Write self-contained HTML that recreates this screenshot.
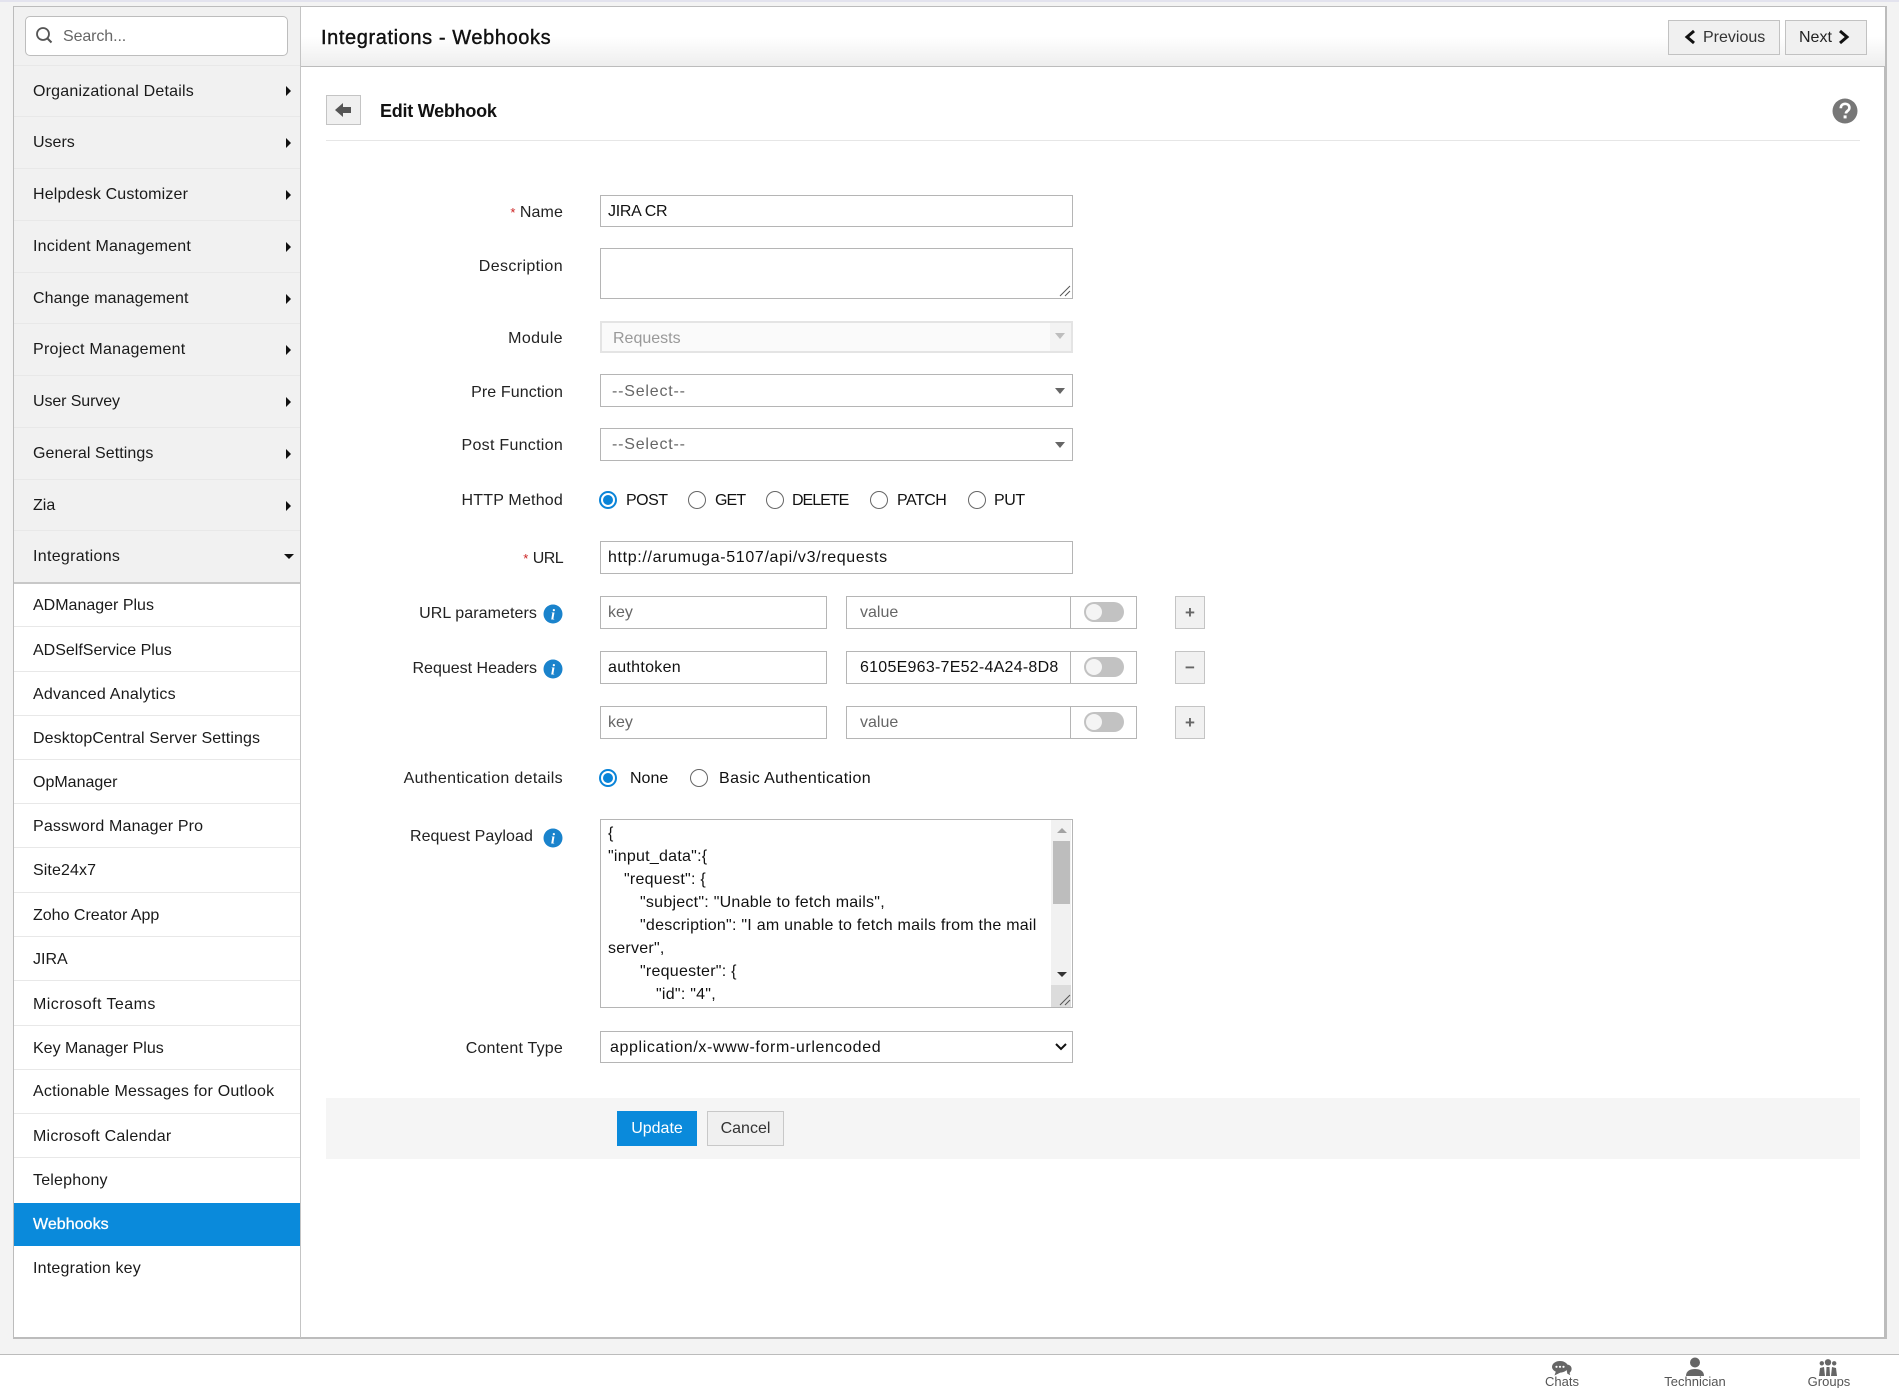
<!DOCTYPE html>
<html><head><meta charset="utf-8"><title>Edit Webhook</title>
<style>
html,body{margin:0;padding:0;background:#fff}
#p{position:relative;width:1899px;height:1388px;overflow:hidden;background:#f3f3f3;font-family:"Liberation Sans",sans-serif;font-size:16px;color:#111}
#p div,#p svg{position:absolute;box-sizing:border-box}
.t{line-height:20px;height:20px;white-space:nowrap;margin-top:2px}
.l{line-height:20px;height:20px;white-space:nowrap;right:1336px;text-align:right;color:#222;margin-top:2px}
.b{background:#fff;border:1px solid #b5b5b5}
.s{left:14px;width:286px;border-bottom:1px solid #e8e8e8}
.n{left:33px;line-height:20px;height:20px;white-space:nowrap;color:#1a1a1a;margin-top:1px}
.u{margin-top:2px}
.a{left:286px;width:0;height:0;border-left:5px solid #111;border-top:5px solid transparent;border-bottom:5px solid transparent;margin-top:1px}
.r{width:18px;height:18px;border:1px solid #666;border-radius:50%;background:#fff}
.rc{width:18px;height:18px;border:2px solid #0a84d8;border-radius:50%;background:#fff}
.rc div{left:2px;top:2px;width:10px;height:10px;border-radius:50%;background:#0a84d8}
.tg{width:40px;height:20px;border-radius:10px;background:#c2c2c2}
.tg div{left:2px;top:2px;width:16px;height:16px;border-radius:50%;background:#f4f4f4}
.pb{background:#f1f1f1;border:1px solid #c4c4c4;width:30px;height:33px;text-align:center;line-height:32px;font-weight:bold;color:#666;font-size:17px}
.pl{left:608px;line-height:23px;height:23px;white-space:nowrap;color:#111;letter-spacing:.25px;margin-top:1px}
.f{color:#555;font-size:13px;line-height:14px;text-align:center;white-space:nowrap;width:100px}
</style></head><body>
<div id="p">
<div style="left:0;top:0;width:1899px;height:2px;background:#e3e3ee"></div>
<div style="left:13px;top:6px;width:1874px;height:1333px;background:#fff;border:1px solid #bcbcbc;border-right:3px solid #bcbcbc;border-bottom:2px solid #bcbcbc"></div>

<!-- sidebar -->
<div style="left:14px;top:7px;width:286px;height:576px;background:#f1f1f1"></div>
<div style="left:300px;top:7px;width:1px;height:1331px;background:#c4c4c4"></div>
<div style="left:14px;top:582px;width:286px;height:2px;background:#c8c8c8"></div>
<div style="left:25px;top:16px;width:263px;height:40px;background:#fff;border:1px solid #bdbdbd;border-radius:5px"></div>
<svg style="left:35px;top:26px" width="18" height="18" viewBox="0 0 18 18"><circle cx="8" cy="8" r="6" fill="none" stroke="#555" stroke-width="1.8"/><path d="M12.5 12.5L16.5 16.5" stroke="#555" stroke-width="2"/></svg>
<div class="t" style="left:63px;top:25px;color:#666;letter-spacing:-.1px">Search...</div>

<div class="s" style="top:65px"></div><div class="n" style="top:81px;letter-spacing:.2px">Organizational Details</div><div class="a" style="top:85px"></div>
<div class="s" style="top:116px"></div><div class="n" style="top:132px">Users</div><div class="a" style="top:137px"></div>
<div class="s" style="top:168px"></div><div class="n" style="top:184px;letter-spacing:.16px">Helpdesk Customizer</div><div class="a" style="top:189px"></div>
<div class="s" style="top:220px"></div><div class="n" style="top:236px;letter-spacing:.22px">Incident Management</div><div class="a" style="top:241px"></div>
<div class="s" style="top:272px"></div><div class="n" style="top:288px;letter-spacing:.1px">Change management</div><div class="a" style="top:293px"></div>
<div class="s" style="top:323px"></div><div class="n" style="top:339px;letter-spacing:.27px">Project Management</div><div class="a" style="top:344px"></div>
<div class="s" style="top:375px"></div><div class="n" style="top:391px;letter-spacing:-.1px">User Survey</div><div class="a" style="top:396px"></div>
<div class="s" style="top:427px"></div><div class="n" style="top:443px;letter-spacing:.08px">General Settings</div><div class="a" style="top:448px"></div>
<div class="s" style="top:479px"></div><div class="n" style="top:495px">Zia</div><div class="a" style="top:500px"></div>
<div class="s" style="top:530px"></div><div class="n" style="top:546px;letter-spacing:.3px">Integrations</div>
<div style="left:284px;top:554px;width:0;height:0;border-top:5px solid #111;border-left:5px solid transparent;border-right:5px solid transparent"></div>

<div class="s" style="top:626px"></div><div class="n u" style="top:594px">ADManager Plus</div>
<div class="s" style="top:671px"></div><div class="n u" style="top:639px">ADSelfService Plus</div>
<div class="s" style="top:715px"></div><div class="n u" style="top:683px;letter-spacing:.23px">Advanced Analytics</div>
<div class="s" style="top:759px"></div><div class="n u" style="top:727px;letter-spacing:.1px">DesktopCentral Server Settings</div>
<div class="s" style="top:803px"></div><div class="n u" style="top:771px">OpManager</div>
<div class="s" style="top:847px"></div><div class="n u" style="top:815px;letter-spacing:.15px">Password Manager Pro</div>
<div class="s" style="top:892px"></div><div class="n u" style="top:859px;letter-spacing:.1px">Site24x7</div>
<div class="s" style="top:936px"></div><div class="n u" style="top:904px">Zoho Creator App</div>
<div class="s" style="top:980px"></div><div class="n u" style="top:948px">JIRA</div>
<div class="s" style="top:1025px"></div><div class="n u" style="top:993px;letter-spacing:.44px">Microsoft Teams</div>
<div class="s" style="top:1069px"></div><div class="n u" style="top:1037px">Key Manager Plus</div>
<div class="s" style="top:1113px"></div><div class="n u" style="top:1080px;letter-spacing:.21px">Actionable Messages for Outlook</div>
<div class="s" style="top:1157px"></div><div class="n u" style="top:1125px;letter-spacing:.23px">Microsoft Calendar</div>
<div class="n u" style="top:1169px;letter-spacing:.2px">Telephony</div>
<div style="left:14px;top:1203px;width:286px;height:43px;background:#0a8adb"></div>
<div class="n u" style="top:1213px;color:#fff;-webkit-text-stroke:.3px #fff;letter-spacing:.05px">Webhooks</div>
<div class="n u" style="top:1257px;letter-spacing:.2px">Integration key</div>

<!-- header -->
<div style="left:301px;top:7px;width:1584px;height:60px;background:linear-gradient(#fff 0,#fff 50%,#eee 100%);border-bottom:1px solid #bcbcbc"></div>
<div class="t" style="left:321px;top:25px;font-size:20px;line-height:22px;height:22px;color:#111;letter-spacing:.6px;-webkit-text-stroke:.4px #111">Integrations - Webhooks</div>
<div style="left:1668px;top:20px;width:112px;height:35px;background:#f0f0f0;border:1px solid #c2c2c2"></div>
<svg style="left:1684px;top:29px" width="12" height="16" viewBox="0 0 12 16"><path d="M10 2L3 8l7 6" fill="none" stroke="#111" stroke-width="3"/></svg>
<div class="t" style="left:1703px;top:26px;color:#333">Previous</div>
<div style="left:1785px;top:20px;width:82px;height:35px;background:#f0f0f0;border:1px solid #c2c2c2"></div>
<div class="t" style="left:1799px;top:26px;color:#222">Next</div>
<svg style="left:1838px;top:29px" width="12" height="16" viewBox="0 0 12 16"><path d="M2 2l7 6-7 6" fill="none" stroke="#111" stroke-width="3"/></svg>

<!-- title row -->
<div style="left:326px;top:95px;width:35px;height:30px;background:#f0f0f0;border:1px solid #c4c4c4"></div>
<svg style="left:334px;top:102px" width="18" height="16" viewBox="0 0 18 16"><path d="M1 8L9 1v4h8v6H9v4z" fill="#555"/></svg>
<div class="t" style="left:380px;top:99px;font-size:18px;font-weight:bold;line-height:20px;letter-spacing:-.25px">Edit Webhook</div>
<svg style="left:1832px;top:98px" width="26" height="26" viewBox="0 0 26 26"><circle cx="13" cy="13" r="12.5" fill="#777"/><path d="M8.8 10.2c0-6 8.6-5.6 8.6-.5 0 3.2-3.5 3.2-3.5 5.8" fill="none" stroke="#fff" stroke-width="2.6"/><rect x="11.6" y="17.4" width="3" height="3" fill="#fff"/></svg>
<div style="left:326px;top:140px;width:1534px;height:1px;background:#e6e6e6"></div>

<!-- labels -->
<div class="l" style="top:201px"><span style="color:#c22;font-size:13px">*</span> <span style="letter-spacing:.1px">Name</span></div>
<div class="l" style="top:255px;letter-spacing:.38px">Description</div>
<div class="l" style="top:327px;letter-spacing:.4px">Module</div>
<div class="l" style="top:381px;letter-spacing:.1px">Pre Function</div>
<div class="l" style="top:434px;letter-spacing:.28px">Post Function</div>
<div class="l" style="top:489px;letter-spacing:.2px">HTTP Method</div>
<div class="l" style="top:547px"><span style="color:#c22;font-size:13px">*</span> <span style="letter-spacing:-.6px">URL</span></div>
<div class="l" style="top:602px;right:1362px;letter-spacing:.08px">URL parameters</div>
<div class="l" style="top:657px;right:1362px">Request Headers</div>
<div class="l" style="top:767px;letter-spacing:.33px">Authentication details</div>
<div class="l" style="top:825px;right:1366px;letter-spacing:.08px">Request Payload</div>
<div class="l" style="top:1037px;letter-spacing:.2px">Content Type</div>

<!-- info icons -->
<svg style="left:543px;top:604px" width="20" height="20" viewBox="0 0 20 20"><circle cx="10" cy="10" r="9.5" fill="#1a83cc"/><text x="10" y="15.5" text-anchor="middle" font-family="Liberation Serif" font-style="italic" font-weight="bold" font-size="15" fill="#fff">i</text></svg>
<svg style="left:543px;top:659px" width="20" height="20" viewBox="0 0 20 20"><circle cx="10" cy="10" r="9.5" fill="#1a83cc"/><text x="10" y="15.5" text-anchor="middle" font-family="Liberation Serif" font-style="italic" font-weight="bold" font-size="15" fill="#fff">i</text></svg>
<svg style="left:543px;top:828px" width="20" height="20" viewBox="0 0 20 20"><circle cx="10" cy="10" r="9.5" fill="#1a83cc"/><text x="10" y="15.5" text-anchor="middle" font-family="Liberation Serif" font-style="italic" font-weight="bold" font-size="15" fill="#fff">i</text></svg>

<!-- name / description -->
<div class="b" style="left:600px;top:195px;width:473px;height:32px"></div>
<div class="t" style="left:608px;top:200px;letter-spacing:-.3px">JIRA CR</div>
<div class="b" style="left:600px;top:248px;width:473px;height:51px"></div>
<svg style="left:1057px;top:283px" width="14" height="14" viewBox="0 0 14 14"><path d="M13 3L3 13M13 8L8 13" stroke="#555" stroke-width="1" fill="none"/></svg>

<!-- selects -->
<div style="left:600px;top:321px;width:473px;height:32px;background:#fafafa;border:2px solid #e4e4e4"></div>
<div style="left:1050px;top:323px;width:21px;height:28px;background:#f3f3f3"></div>
<div class="t" style="left:613px;top:327px;color:#999">Requests</div>
<div style="left:1055px;top:333px;width:0;height:0;border-top:6px solid #bdbdbd;border-left:5px solid transparent;border-right:5px solid transparent"></div>

<div class="b" style="left:600px;top:374px;width:473px;height:33px"></div>
<div class="t" style="left:612px;top:380px;color:#666;letter-spacing:.8px">--Select--</div>
<div style="left:1055px;top:388px;width:0;height:0;border-top:6px solid #666;border-left:5px solid transparent;border-right:5px solid transparent"></div>
<div class="b" style="left:600px;top:428px;width:473px;height:33px"></div>
<div class="t" style="left:612px;top:433px;color:#666;letter-spacing:.8px">--Select--</div>
<div style="left:1055px;top:442px;width:0;height:0;border-top:6px solid #666;border-left:5px solid transparent;border-right:5px solid transparent"></div>

<!-- http method -->
<div class="rc" style="left:599px;top:491px"><div></div></div><div class="t" style="left:626px;top:489px;letter-spacing:-.5px">POST</div>
<div class="r" style="left:688px;top:491px"></div><div class="t" style="left:715px;top:489px;letter-spacing:-.9px">GET</div>
<div class="r" style="left:766px;top:491px"></div><div class="t" style="left:792px;top:489px;letter-spacing:-1px">DELETE</div>
<div class="r" style="left:870px;top:491px"></div><div class="t" style="left:897px;top:489px;letter-spacing:-.5px">PATCH</div>
<div class="r" style="left:968px;top:491px"></div><div class="t" style="left:994px;top:489px;letter-spacing:-.4px">PUT</div>

<!-- url -->
<div class="b" style="left:600px;top:541px;width:473px;height:33px"></div>
<div class="t" style="left:608px;top:546px;letter-spacing:.65px">http://arumuga-5107/api/v3/requests</div>

<!-- kv rows -->
<div class="b" style="left:600px;top:596px;width:227px;height:33px"></div>
<div class="t" style="left:608px;top:601px;color:#666">key</div>
<div class="b" style="left:846px;top:596px;width:291px;height:33px"></div>
<div style="left:1070px;top:596px;width:1px;height:33px;background:#b5b5b5"></div>
<div class="t" style="left:860px;top:601px;color:#666">value</div>
<div class="tg" style="left:1084px;top:602px"><div></div></div>
<div class="pb" style="left:1175px;top:596px">+</div>

<div class="b" style="left:600px;top:651px;width:227px;height:33px"></div>
<div class="t" style="left:608px;top:656px;letter-spacing:.3px">authtoken</div>
<div class="b" style="left:846px;top:651px;width:291px;height:33px"></div>
<div style="left:1070px;top:651px;width:1px;height:33px;background:#b5b5b5"></div>
<div class="t" style="left:860px;top:656px;letter-spacing:.25px">6105E963-7E52-4A24-8D8</div>
<div class="tg" style="left:1084px;top:657px"><div></div></div>
<div class="pb" style="left:1175px;top:651px">&#8722;</div>

<div class="b" style="left:600px;top:706px;width:227px;height:33px"></div>
<div class="t" style="left:608px;top:711px;color:#666">key</div>
<div class="b" style="left:846px;top:706px;width:291px;height:33px"></div>
<div style="left:1070px;top:706px;width:1px;height:33px;background:#b5b5b5"></div>
<div class="t" style="left:860px;top:711px;color:#666">value</div>
<div class="tg" style="left:1084px;top:712px"><div></div></div>
<div class="pb" style="left:1175px;top:706px">+</div>

<!-- auth -->
<div class="rc" style="left:599px;top:769px"><div></div></div><div class="t" style="left:630px;top:767px">None</div>
<div class="r" style="left:690px;top:769px"></div><div class="t" style="left:719px;top:767px;letter-spacing:.4px">Basic Authentication</div>

<!-- payload -->
<div class="b" style="left:600px;top:819px;width:473px;height:189px;overflow:hidden">
<div class="pl" style="left:7px;top:1px">{</div>
<div class="pl" style="left:7px;top:24px">"input_data":{</div>
<div class="pl" style="left:23px;top:47px">"request": {</div>
<div class="pl" style="left:39px;top:70px">"subject": "Unable to fetch mails",</div>
<div class="pl" style="left:39px;top:93px">"description": "I am unable to fetch mails from the mail</div>
<div class="pl" style="left:7px;top:116px">server",</div>
<div class="pl" style="left:39px;top:139px">"requester": {</div>
<div class="pl" style="left:55px;top:162px">"id": "4",</div>
</div>
<div style="left:1051px;top:820px;width:20px;height:187px;background:#f1f1f1"></div>
<div style="left:1053px;top:841px;width:17px;height:63px;background:#bdbdbd"></div>
<div style="left:1057px;top:828px;width:0;height:0;border-bottom:5px solid #a3a3a3;border-left:5px solid transparent;border-right:5px solid transparent"></div>
<div style="left:1057px;top:972px;width:0;height:0;border-top:5px solid #333;border-left:5px solid transparent;border-right:5px solid transparent"></div>
<div style="left:1051px;top:985px;width:20px;height:22px;background:#dcdcdc"></div>
<svg style="left:1057px;top:992px" width="14" height="14" viewBox="0 0 14 14"><path d="M13 3L3 13M13 8L8 13" stroke="#555" stroke-width="1" fill="none"/></svg>

<!-- content type -->
<div class="b" style="left:600px;top:1031px;width:473px;height:32px"></div>
<div class="t" style="left:610px;top:1036px;letter-spacing:.62px">application/x-www-form-urlencoded</div>
<svg style="left:1054px;top:1042px" width="14" height="10" viewBox="0 0 14 10"><path d="M2 2l5 5 5-5" fill="none" stroke="#111" stroke-width="2"/></svg>

<!-- actions -->
<div style="left:326px;top:1098px;width:1534px;height:61px;background:#f5f5f5"></div>
<div style="left:617px;top:1111px;width:80px;height:35px;background:#0a8adb"></div>
<div class="t" style="left:617px;top:1117px;width:80px;text-align:center;color:#fff">Update</div>
<div style="left:707px;top:1111px;width:77px;height:35px;background:#f0f0f0;border:1px solid #c8c8c8"></div>
<div class="t" style="left:707px;top:1117px;width:77px;text-align:center;color:#333">Cancel</div>

<!-- footer -->
<div style="left:0;top:1354px;width:1899px;height:34px;background:#fff;border-top:1px solid #bcbcbc"></div>
<svg style="left:1552px;top:1361px" width="20" height="15" viewBox="0 0 20 15"><path d="M13 3c5 0 7 2 7 5 0 2-1 3-2 4l1 3-4-2z" fill="#666" stroke="#fff" stroke-width=".8"/><ellipse cx="8" cy="5.800" rx="8" ry="5.800" fill="#666"/><path d="M4 10l-1.500 4.500 6-3z" fill="#666"/><circle cx="4.500" cy="5.800" r="1.100" fill="#fff"/><circle cx="8" cy="5.800" r="1.100" fill="#fff"/><circle cx="11.500" cy="5.800" r="1.100" fill="#fff"/></svg>
<div class="f" style="left:1512px;top:1375px">Chats</div>
<svg style="left:1686px;top:1357px" width="18" height="19" viewBox="0 0 18 19"><circle cx="9" cy="5.500" r="5" fill="#666"/><path d="M0 19c0-5 4-7 9-7s9 2 9 7z" fill="#666"/></svg>
<div class="f" style="left:1645px;top:1375px">Technician</div>
<svg style="left:1819px;top:1359px" width="18" height="17" viewBox="0 0 18 17"><circle cx="9" cy="3.300" r="3.200" fill="#666"/><circle cx="2.800" cy="4.300" r="2.200" fill="#666"/><circle cx="15.200" cy="4.300" r="2.200" fill="#666"/><path d="M0 17l1-8 4-1 1 9zM18 17l-1-8-4-1-1 9zM7 17l.5-9h3l.5 9z" fill="#666"/></svg>
<div class="f" style="left:1779px;top:1375px">Groups</div>
</div>
</body></html>
